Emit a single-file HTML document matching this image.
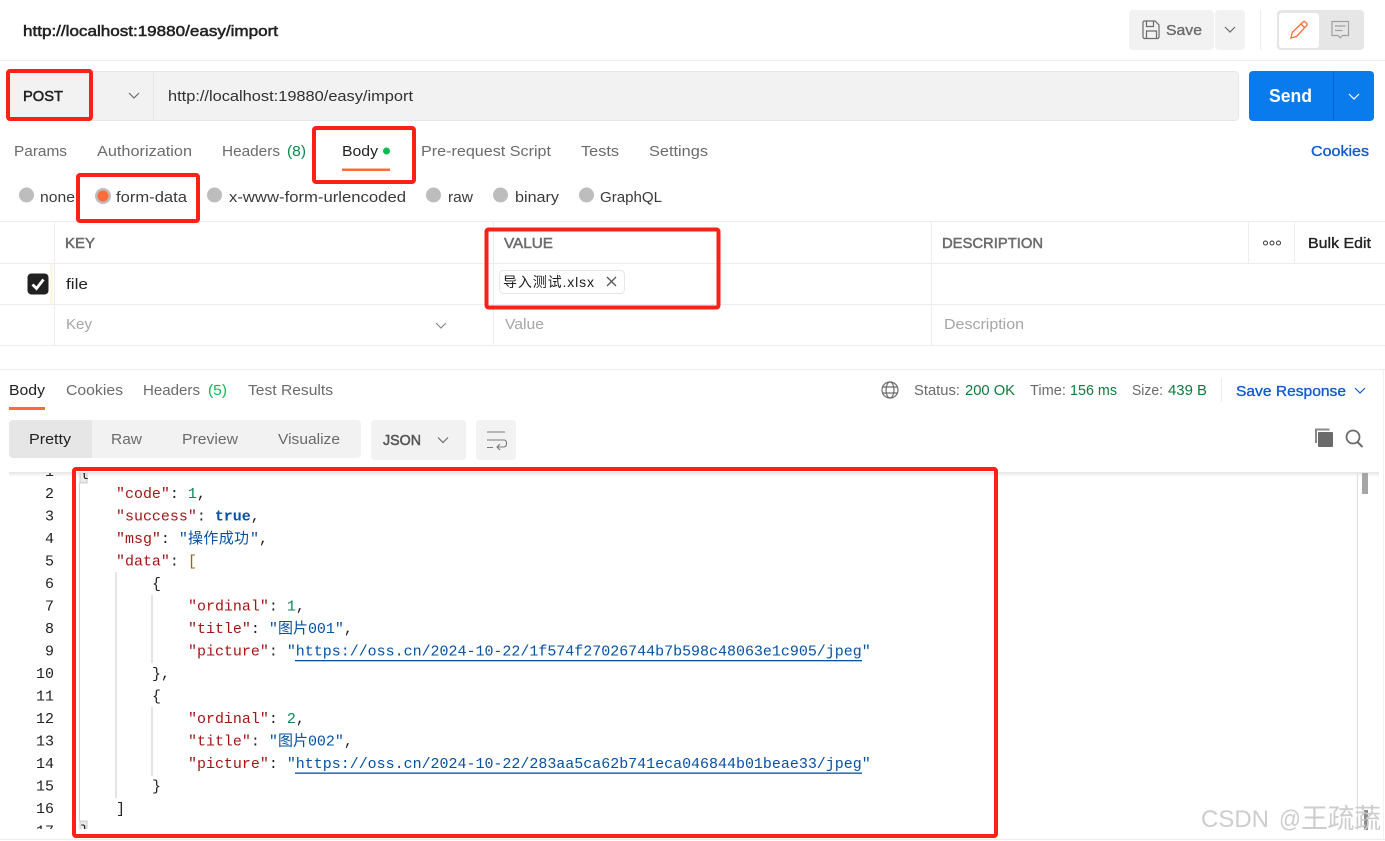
<!DOCTYPE html>
<html><head><meta charset="utf-8"><style>
html,body{margin:0;padding:0;background:#fff;width:1385px;height:841px;overflow:hidden}
svg{display:block}
text{font-family:"Liberation Sans","Noto Sans CJK SC",sans-serif;font-size:15px;fill:#6b6b6b}
.d{fill:#212121}
.m{stroke:currentColor;stroke-width:.35}
.h{stroke:currentColor;stroke-width:.5}
.c text,.c{font-family:"Liberation Mono","Noto Sans CJK SC",monospace;font-size:14.98px;fill:#212121}
.n{fill:#237893;text-anchor:end}
.k{fill:#a31515}.s{fill:#0451a5}.v{fill:#098658}.b{fill:#0451a5;font-weight:bold}
.y{fill:#8a6d00}
.r{fill:none;stroke:#fb2116;stroke-width:4}
.l{stroke:#ededed;stroke-width:1;fill:none}
.i{fill:none;stroke:#6b6b6b;stroke-width:1.2}
</style></head><body>
<svg width="1385" height="841" viewBox="0 0 1385 841" xmlns="http://www.w3.org/2000/svg">
<defs><clipPath id="cc"><rect x="0" y="473" width="1356" height="356"/></clipPath>
<linearGradient id="sh" x1="0" y1="0" x2="0" y2="1"><stop offset="0" stop-color="#e4e4e4"/><stop offset="1" stop-color="#fff"/></linearGradient></defs>
<rect width="1385" height="841" fill="#fff"/>

<!-- header -->
<text x="23" y="36" textLength="255" lengthAdjust="spacingAndGlyphs" class="d h" color="#212121">http://localhost:19880/easy/import</text>
<path d="M0 60.500H1385" class="l"/>
<rect x="1129" y="10" width="85" height="40" rx="4" fill="#f2f2f2"/>
<rect x="1215" y="10" width="30" height="40" rx="4" fill="#f2f2f2"/>
<path d="M1143 22.500a1.500 1.500 0 0 1 1.500-1.500H1155l4 4V37a1.500 1.500 0 0 1-1.500 1.500h-13a1.500 1.500 0 0 1-1.500-1.500Z M1146.500 21.500v5h7v-5 M1146.500 38v-7h10v7" class="i"/>
<text x="1166" y="35" textLength="36" lengthAdjust="spacingAndGlyphs" class="m" color="#6b6b6b">Save</text>
<path d="M1225 27l5 5 5-5" class="i"/>
<path d="M1260.500 10V50" class="l"/>
<rect x="1277" y="10" width="87" height="40" rx="4" fill="#e6e6e6"/>
<rect x="1279" y="13" width="40" height="35" rx="3" fill="#fff"/>
<path d="M1291 38l1.200-5.500L1303 22a1.600 1.600 0 0 1 2.300 0l1.300 1.300a1.600 1.600 0 0 1 0 2.300L1296.500 36.500Z M1301 24l4 4" fill="none" stroke="#ff6c37" stroke-width="1.300"/>
<path d="M1332 21.500h16.500v14h-6l-2.200 2.500-2.200-2.500h-6.100Z M1335 26h10.500 M1335 30.500h7.500" fill="none" stroke="#a0a0a0" stroke-width="1.200"/>

<!-- URL bar -->
<rect x="7.500" y="71.500" width="1231" height="49" rx="4" fill="#f2f2f2" stroke="#e6e6e6"/>
<path d="M153.500 72V120" stroke="#e6e6e6"/>
<text x="23" y="101" textLength="40" lengthAdjust="spacingAndGlyphs" class="d h" color="#212121">POST</text>
<path d="M129 93l5 5 5-5" class="i"/>
<text x="168" y="101" textLength="245" lengthAdjust="spacingAndGlyphs" class="d" style="fill:#303030">http://localhost:19880/easy/import</text>
<rect x="1249" y="71" width="125" height="50" rx="4" fill="#097bed"/>
<rect x="1333" y="71" width="1" height="50" fill="#0265d2"/>
<text x="1269" y="102" textLength="43" lengthAdjust="spacingAndGlyphs" style="fill:#fff;font-size:18px;font-weight:bold">Send</text>
<path d="M1349 94l5 5 5-5" fill="none" stroke="#fff" stroke-width="1.200"/>

<!-- tabs -->
<g>
<text x="14" y="156" textLength="53" lengthAdjust="spacingAndGlyphs">Params</text>
<text x="97" y="156" textLength="95" lengthAdjust="spacingAndGlyphs">Authorization</text>
<text x="222" y="156" textLength="58" lengthAdjust="spacingAndGlyphs">Headers</text>
<text x="287" y="156" textLength="19" lengthAdjust="spacingAndGlyphs" style="fill:#0a8a4a">(8)</text>
<text x="342" y="156" textLength="36" lengthAdjust="spacingAndGlyphs" class="d">Body</text>
<circle cx="386.500" cy="151" r="3.500" fill="#0cbb52"/>
<rect x="342" y="168.500" width="48" height="2.500" fill="#ff6c37"/>
<text x="421" y="156" textLength="130" lengthAdjust="spacingAndGlyphs">Pre-request Script</text>
<text x="581" y="156" textLength="38" lengthAdjust="spacingAndGlyphs">Tests</text>
<text x="649" y="156" textLength="59" lengthAdjust="spacingAndGlyphs">Settings</text>
<text x="1311" y="156" textLength="58" lengthAdjust="spacingAndGlyphs" class="m" color="#0f5bd0" style="fill:#0f5bd0">Cookies</text>
</g>

<!-- radios -->
<circle cx="26.500" cy="195" r="7.500" fill="#bdbdbd"/>
<text x="40" y="202" textLength="35" lengthAdjust="spacingAndGlyphs" style="fill:#3a3a3a">none</text>
<circle cx="103" cy="196" r="8" fill="#bdbdbd"/>
<circle cx="103" cy="196" r="5.500" fill="#ff6c37"/>
<text x="116" y="202" textLength="71" lengthAdjust="spacingAndGlyphs" style="fill:#3a3a3a">form-data</text>
<circle cx="214.500" cy="195" r="7.500" fill="#bdbdbd"/>
<text x="229" y="202" textLength="177" lengthAdjust="spacingAndGlyphs" style="fill:#3a3a3a">x-www-form-urlencoded</text>
<circle cx="433.500" cy="195" r="7.500" fill="#bdbdbd"/>
<text x="448" y="202" textLength="25" lengthAdjust="spacingAndGlyphs" style="fill:#3a3a3a">raw</text>
<circle cx="500.500" cy="195" r="7.500" fill="#bdbdbd"/>
<text x="515" y="202" textLength="44" lengthAdjust="spacingAndGlyphs" style="fill:#3a3a3a">binary</text>
<circle cx="586.500" cy="195" r="7.500" fill="#bdbdbd"/>
<text x="600" y="202" textLength="62" lengthAdjust="spacingAndGlyphs" style="fill:#3a3a3a">GraphQL</text>

<!-- table -->
<path d="M0 221.500H1385 M0 263.500H1385 M0 304.500H1385 M0 345.500H1385 M54.500 222V345 M493.500 222V345 M931.500 222V345 M1248.500 222V263 M1294.500 222V263" class="l"/>
<rect x="50" y="264" width="3" height="40" fill="#fdf8e4"/>
<text x="65" y="248" textLength="30" lengthAdjust="spacingAndGlyphs" class="h" color="#6b6b6b">KEY</text>
<text x="504" y="248" textLength="49" lengthAdjust="spacingAndGlyphs" class="h" color="#6b6b6b">VALUE</text>
<text x="942" y="248" textLength="101" lengthAdjust="spacingAndGlyphs" class="h" color="#6b6b6b">DESCRIPTION</text>
<circle cx="1265.500" cy="243" r="2" fill="none" stroke="#3a3a3a"/>
<circle cx="1272" cy="243" r="2" fill="none" stroke="#3a3a3a"/>
<circle cx="1278.500" cy="243" r="2" fill="none" stroke="#3a3a3a"/>
<text x="1308" y="248" textLength="63" lengthAdjust="spacingAndGlyphs" class="d m" color="#212121">Bulk Edit</text>
<rect x="27.500" y="273.500" width="21" height="21" rx="4" fill="#212121"/>
<path d="M32.500 284.500l4 4 7-9" fill="none" stroke="#fff" stroke-width="2.800"/>
<text x="66" y="289" textLength="22" lengthAdjust="spacingAndGlyphs" class="d">file</text>
<rect x="499.500" y="270.500" width="125" height="23" rx="4" fill="#fff" stroke="#e6e6e6"/>
<text x="503" y="287" textLength="91" style="fill:#212121;font-size:14px">导入测试.xlsx</text>
<path d="M607 277l9 9 M616 277l-9 9" fill="none" stroke="#555" stroke-width="1.300"/>
<text x="66" y="329" textLength="26" lengthAdjust="spacingAndGlyphs" style="fill:#a6a6a6">Key</text>
<path d="M436 323l5 5 5-5" fill="none" stroke="#8a8a8a" stroke-width="1.200"/>
<text x="505" y="329" textLength="39" lengthAdjust="spacingAndGlyphs" style="fill:#a6a6a6">Value</text>
<text x="944" y="329" textLength="80" lengthAdjust="spacingAndGlyphs" style="fill:#a6a6a6">Description</text>

<!-- response -->
<path d="M0 369.500H1385" class="l"/>
<path d="M1383.500 370V839" stroke="#f2f2f2"/>
<text x="9" y="395" textLength="36" lengthAdjust="spacingAndGlyphs" class="d">Body</text>
<rect x="9" y="407" width="36" height="3" fill="#ff6c37"/>
<text x="66" y="395" textLength="57" lengthAdjust="spacingAndGlyphs">Cookies</text>
<text x="143" y="395" textLength="57" lengthAdjust="spacingAndGlyphs">Headers</text>
<text x="208" y="395" textLength="19" lengthAdjust="spacingAndGlyphs" style="fill:#0cbb52">(5)</text>
<text x="248" y="395" textLength="85" lengthAdjust="spacingAndGlyphs">Test Results</text>
<g fill="none" stroke="#6b6b6b" stroke-width="1.200"><circle cx="890" cy="390" r="8"/><ellipse cx="890" cy="390" rx="4" ry="8"/><path d="M882.500 387h15 M882.500 393h15"/></g>
<text x="914" y="395" textLength="46" lengthAdjust="spacingAndGlyphs">Status:</text>
<text x="965" y="395" textLength="50" lengthAdjust="spacingAndGlyphs" style="fill:#0a7d3e">200 OK</text>
<text x="1030" y="395" textLength="36" lengthAdjust="spacingAndGlyphs">Time:</text>
<text x="1070" y="395" textLength="47" lengthAdjust="spacingAndGlyphs" style="fill:#0a7d3e">156 ms</text>
<text x="1132" y="395" textLength="31" lengthAdjust="spacingAndGlyphs">Size:</text>
<text x="1168" y="395" textLength="39" lengthAdjust="spacingAndGlyphs" style="fill:#0a7d3e">439 B</text>
<path d="M1221.500 378V402" class="l"/>
<text x="1236" y="396" textLength="110" lengthAdjust="spacingAndGlyphs" class="m" color="#0f5bd0" style="fill:#0f5bd0">Save Response</text>
<path d="M1355 388l5 5 5-5" fill="none" stroke="#0f5bd0" stroke-width="1.200"/>

<rect x="9" y="420" width="352" height="38" rx="4" fill="#f2f2f2"/>
<path d="M13 420h79v38H13a4 4 0 0 1-4-4v-30a4 4 0 0 1 4-4Z" fill="#e6e6e6"/>
<text x="29" y="444" textLength="42" lengthAdjust="spacingAndGlyphs" class="d">Pretty</text>
<text x="111" y="444" textLength="31" lengthAdjust="spacingAndGlyphs">Raw</text>
<text x="182" y="444" textLength="56" lengthAdjust="spacingAndGlyphs">Preview</text>
<text x="278" y="444" textLength="62" lengthAdjust="spacingAndGlyphs">Visualize</text>
<rect x="371" y="420" width="95" height="40" rx="4" fill="#f2f2f2"/>
<text x="383" y="445" textLength="38" lengthAdjust="spacingAndGlyphs" class="h" color="#555" style="fill:#555">JSON</text>
<path d="M438 437.500l5 5 5-5" class="i"/>
<rect x="476" y="420" width="40" height="40" rx="4" fill="#f2f2f2"/>
<path d="M487 432h18 M487 440h18 M487 447.500h6 M504 440q2.500 0 2.500 3.500t-3 3.500h-6 M500 444l-3 3 3 3" fill="none" stroke="#7a7a7a" stroke-width="1.100"/>
<path d="M1316 443v-13.500h13.500" fill="none" stroke="#8a8a8a" stroke-width="2"/>
<rect x="1318" y="432" width="15" height="15" rx="1" fill="#6b6b6b"/>
<circle cx="1353" cy="437" r="6.500" fill="none" stroke="#6b6b6b" stroke-width="1.800"/>
<path d="M1357.500 442l5 5" stroke="#6b6b6b" stroke-width="2"/>

<!-- code -->
<rect x="9" y="472" width="1370" height="5" fill="url(#sh)"/>
<g clip-path="url(#cc)">
<rect x="80" y="473" width="7" height="10" fill="#ececec" stroke="#c8c8c8"/>
<rect x="80" y="821" width="7" height="10" fill="#ececec" stroke="#c8c8c8"/>
<path d="M79.500 483V821" stroke="#d0d0d0"/>
<path d="M116 572V798" stroke="#d8d8d8" stroke-width="1.400"/>
<path d="M152 595V663 M152 707V776" stroke="#d8d8d8" stroke-width="1.400"/>
<g class="c" transform="translate(0,-1)">
<text class="n" x="54" y="477">1</text>
<text x="80" y="477">{</text>
<text class="n" x="54" y="499">2</text>
<text class="n" x="54" y="521.500">3</text>
<text class="n" x="54" y="544">4</text>
<text class="n" x="54" y="566.500">5</text>
<text class="n" x="54" y="589">6</text>
<text class="n" x="54" y="611.500">7</text>
<text class="n" x="54" y="634">8</text>
<text class="n" x="54" y="656.500">9</text>
<text class="n" x="54" y="679">10</text>
<text class="n" x="54" y="701.500">11</text>
<text class="n" x="54" y="724">12</text>
<text class="n" x="54" y="746.500">13</text>
<text class="n" x="54" y="769">14</text>
<text class="n" x="54" y="791.500">15</text>
<text class="n" x="54" y="814">16</text>
<text class="n" x="54" y="836.500">17</text>
<text x="80" y="836.500">}</text>

<text x="116" y="499"><tspan class="k">"code"</tspan>: <tspan class="v">1</tspan>,</text>
<text x="116" y="521.500"><tspan class="k">"success"</tspan>: <tspan class="b">true</tspan>,</text>
<text x="116" y="544"><tspan class="k">"msg"</tspan>: <tspan class="s">"</tspan></text>
<text x="188" y="544" class="s" textLength="61" style="fill:#0451a5">操作成功</text>
<text x="250" y="544"><tspan class="s">"</tspan>,</text>
<text x="116" y="566.500"><tspan class="k">"data"</tspan>: <tspan class="y">[</tspan></text>
<text x="152" y="589">{</text>
<text x="188" y="611.500"><tspan class="k">"ordinal"</tspan>: <tspan class="v">1</tspan>,</text>
<text x="188" y="634"><tspan class="k">"title"</tspan>: <tspan class="s">"</tspan></text>
<text x="278" y="634" style="fill:#0451a5">图片<tspan font-family="Liberation Mono">001"</tspan><tspan style="fill:#212121" font-family="Liberation Mono">,</tspan></text>
<text x="188" y="656.500"><tspan class="k">"picture"</tspan>: <tspan class="s">"https://oss.cn/2024-10-22/1f574f27026744b7b598c48063e1c905/jpeg"</tspan></text>
<text x="152" y="679">},</text>
<text x="152" y="701.500">{</text>
<text x="188" y="724"><tspan class="k">"ordinal"</tspan>: <tspan class="v">2</tspan>,</text>
<text x="188" y="746.500"><tspan class="k">"title"</tspan>: <tspan class="s">"</tspan></text>
<text x="278" y="746.500" style="fill:#0451a5">图片<tspan font-family="Liberation Mono">002"</tspan><tspan style="fill:#212121" font-family="Liberation Mono">,</tspan></text>
<text x="188" y="769"><tspan class="k">"picture"</tspan>: <tspan class="s">"https://oss.cn/2024-10-22/283aa5ca62b741eca046844b01beae33/jpeg"</tspan></text>
<text x="152" y="791.500">}</text>
<text x="116" y="814">]</text>
</g>
<rect x="295" y="660" width="567" height="1.300" fill="#0451a5"/>
<rect x="295" y="772.500" width="567" height="1.300" fill="#0451a5"/>
</g>

<!-- scrollbar -->
<path d="M1357.500 473V830" stroke="#dcdcdc"/>
<rect x="1362" y="473" width="6" height="21" fill="#a6a6a6"/>
<rect x="1364" y="810" width="4" height="20" fill="#8a8a8a"/>
<path d="M0 839.500H1385" class="l"/>

<!-- annotation boxes -->
<rect x="8" y="71" width="83" height="48" rx="2" class="r"/>
<rect x="314" y="128" width="100" height="54" rx="2" class="r"/>
<rect x="78" y="175" width="120" height="46" rx="2" class="r"/>
<rect x="486.500" y="229.500" width="232" height="78" rx="2" class="r"/>
<rect x="74" y="469" width="922" height="367" rx="2" class="r"/>

<!-- watermark -->
<text x="1201" y="827" textLength="68" lengthAdjust="spacingAndGlyphs" style="font-size:24px;fill:#cdcdcd">CSDN</text>
<text x="1279" y="827" textLength="22" lengthAdjust="spacingAndGlyphs" style="font-size:24px;fill:#cdcdcd">@</text>
<text x="1301" y="828" textLength="80" style="font-size:27px;fill:#cdcdcd">王疏蔬</text>
</svg>
</body></html>
